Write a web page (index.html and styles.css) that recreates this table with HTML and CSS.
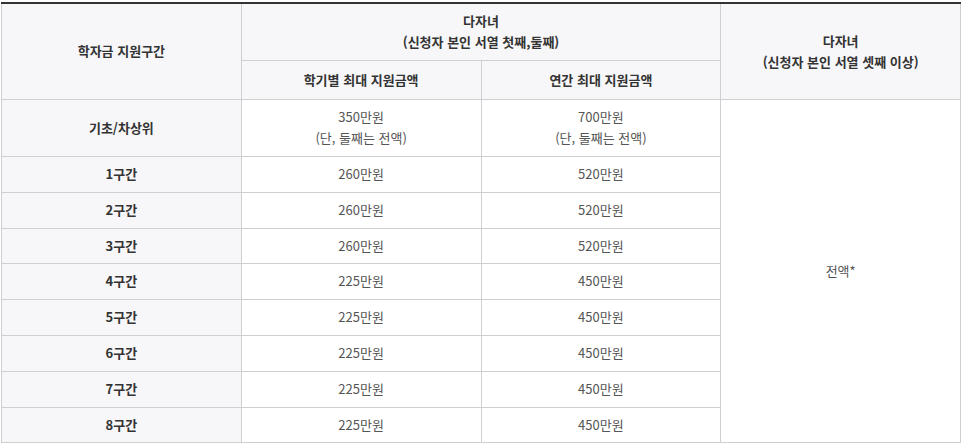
FILE: index.html
```html
<!DOCTYPE html>
<html lang="ko">
<head>
<meta charset="utf-8">
<title>학자금 지원구간</title>
<link rel="stylesheet" href="styles.css">
</head>
<body>
<div class="wrap">
<table class="tbl">
  <colgroup>
    <col class="c"><col class="c"><col class="c"><col class="c">
  </colgroup>
  <thead>
    <tr class="h1">
      <th rowspan="2">학자금 지원구간</th>
      <th colspan="2">다자녀<br>(신청자 본인 서열 첫째,둘째)</th>
      <th rowspan="2">다자녀<br>(신청자 본인 서열 셋째 이상)</th>
    </tr>
    <tr class="h2">
      <th>학기별 최대 지원금액</th>
      <th>연간 최대 지원금액</th>
    </tr>
  </thead>
  <tbody>
    <tr>
      <th>기초/차상위</th>
      <td>350만원<br>(단, 둘째는 전액)</td>
      <td>700만원<br>(단, 둘째는 전액)</td>
      <td rowspan="9">전액*</td>
    </tr>
    <tr><th>1구간</th><td>260만원</td><td>520만원</td></tr>
    <tr><th>2구간</th><td>260만원</td><td>520만원</td></tr>
    <tr><th>3구간</th><td>260만원</td><td>520만원</td></tr>
    <tr><th>4구간</th><td>225만원</td><td>450만원</td></tr>
    <tr><th>5구간</th><td>225만원</td><td>450만원</td></tr>
    <tr><th>6구간</th><td>225만원</td><td>450만원</td></tr>
    <tr><th>7구간</th><td>225만원</td><td>450만원</td></tr>
    <tr><th>8구간</th><td>225만원</td><td>450만원</td></tr>
  </tbody>
</table>
</div>
</body>
</html>
```

FILE: styles.css
```css
html, body {
  margin: 0;
  padding: 0;
  background: #fff;
}
body {
  font-family: "Noto Sans CJK KR", "Noto Sans", "Liberation Sans", sans-serif;
  font-size: 13px;
  color: #555;
}
.wrap {
  padding: 2px 0 0 1px;
}
.tbl {
  width: 960px;
  table-layout: fixed;
  border-collapse: collapse;
  border-top: 2px solid #333;
  line-height: 20.8px;
}
.tbl .c {
  width: 25%;
}
.tbl th,
.tbl td {
  border: 1px solid #cfcfd1;
  text-align: center;
  vertical-align: middle;
  padding: 7px 6px;
}
.tbl th {
  background: #f7f7f9;
  color: #333;
  font-weight: 600;
}
.tbl td {
  background: #fff;
  color: #555;
  font-weight: 400;
}
.tbl .h1 th {
  padding-top: 7px;
  padding-bottom: 7px;
}
.tbl .h2 th {
  padding-top: 9px;
  padding-bottom: 9px;
}
```
